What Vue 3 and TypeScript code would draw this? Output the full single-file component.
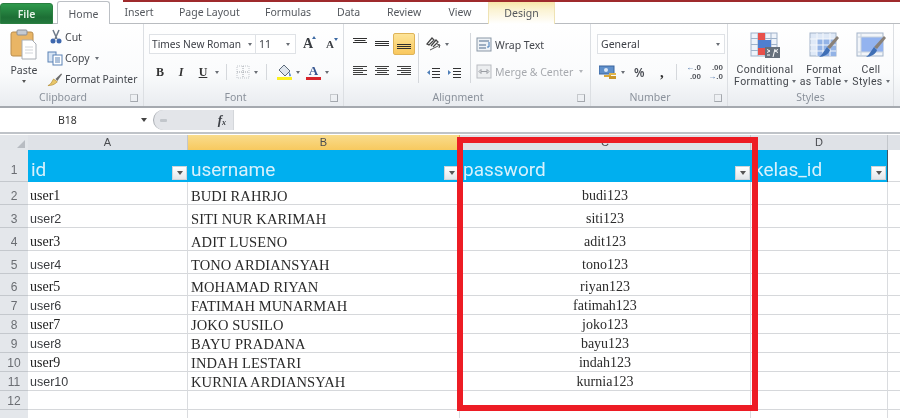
<script setup lang="ts">
interface Row { n: number; h: number; user: string; name: string; pass: string }
const rows: Row[] = [
  { n: 2, h: 23, user: 'user1', name: 'BUDI RAHRJO', pass: 'budi123' },
  { n: 3, h: 23, user: 'user2', name: 'SITI NUR KARIMAH', pass: 'siti123' },
  { n: 4, h: 23, user: 'user3', name: 'ADIT LUSENO', pass: 'adit123' },
  { n: 5, h: 23, user: 'user4', name: 'TONO ARDIANSYAH', pass: 'tono123' },
  { n: 6, h: 22, user: 'user5', name: 'MOHAMAD RIYAN', pass: 'riyan123' },
  { n: 7, h: 19, user: 'user6', name: 'FATIMAH MUNARMAH', pass: 'fatimah123' },
  { n: 8, h: 19, user: 'user7', name: 'JOKO SUSILO', pass: 'joko123' },
  { n: 9, h: 19, user: 'user8', name: 'BAYU PRADANA', pass: 'bayu123' },
  { n: 10, h: 19, user: 'user9', name: 'INDAH LESTARI', pass: 'indah123' },
  { n: 11, h: 19, user: 'user10', name: 'KURNIA ARDIANSYAH', pass: 'kurnia123' },
  { n: 12, h: 19, user: '', name: '', pass: '' },
]
const headers = ['id', 'username', 'password', 'kelas_id']
const alignV = [
  ['M1 .5h14M2.500 2.500h11M1 4.500h14', false],
  ['M1 3.500h14M1 5.500h14M1 7.500h14', false],
  ['M1 6.500h14M1 8.500h14M1 10.500h14', true],
] as [string, boolean][]
const alignH = [
  'M1 1.500h14M1 3.500h10M1 5.500h14M1 7.500h10M1 9.500h14',
  'M1 1.500h14M3 3.500h10M1 5.500h14M3 7.500h10M1 9.500h14',
  'M1 1.500h14M5 3.500h10M1 5.500h14M5 7.500h10M1 9.500h14',
]
const isSerif = (n: number) => n % 2 === 0
</script>

<template>
  <div class="app">
    <header class="tabs">
      <div class="tab file">File</div>
      <div class="tab home">Home</div>
      <div class="tab t-insert">Insert</div>
      <div class="tab t-layout">Page Layout</div>
      <div class="tab t-formulas">Formulas</div>
      <div class="tab t-data">Data</div>
      <div class="tab t-review">Review</div>
      <div class="tab t-view">View</div>
      <div class="tab design">Design</div>
    </header>

    <section class="ribbon">
      <div class="group g-clip">
        <div class="g-body clip-body">
          <div class="paste">
            <svg width="28" height="31" viewBox="0 0 28 31">
              <rect x="1" y="3" width="22" height="24" rx="2" fill="#e9b565" stroke="#b98d4e" />
              <rect x="7" y="1" width="10" height="5" rx="1" fill="#c4cad2" stroke="#8b8f96" />
              <path d="M12 11h10l4 4v15H12z" fill="#fff" stroke="#a8adb4" />
              <path d="M15 18h8M15 21h8M15 24h8" stroke="#d2d5da" />
            </svg>
            <span class="lbl">Paste</span>
            <i class="caret"></i>
          </div>
          <div class="clip-list">
            <div class="clip-item">
              <svg width="16" height="16" viewBox="0 0 16 16"><path d="M6 1l4 9M12 1L8 10" stroke="#6d7a8a" stroke-width="1.500" fill="none" /><circle cx="6" cy="12" r="2.500" fill="#3e68ae" /><circle cx="12" cy="12" r="2.500" fill="#3e68ae" /></svg>
              <span class="lbl">Cut</span>
            </div>
            <div class="clip-item">
              <svg width="16" height="15" viewBox="0 0 16 15"><rect x="1" y="1" width="8" height="10" fill="#d7e4f4" stroke="#5b82b5" /><rect x="6" y="4" width="9" height="10" fill="#fff" stroke="#5b82b5" /><path d="M8 7h5M8 9h5M8 11h5" stroke="#5b82b5" /></svg>
              <span class="lbl">Copy</span><i class="caret small"></i>
            </div>
            <div class="clip-item fp">
              <svg width="16" height="15" viewBox="0 0 17 15"><path d="M1 14c3-1 4-4 6-7l4 3c-3 3-6 4-10 4z" fill="#e8c66a" stroke="#b28d32" stroke-width=".7" /><path d="M9 7l6-6 1 1-5 7z" fill="#6c6c6c" /></svg>
              <span class="lbl">Format Painter</span>
            </div>
          </div>
        </div>
        <div class="g-label pad17">Clipboard<i class="launcher"></i></div>
      </div>

      <div class="group g-font">
        <div class="g-body font-body">
          <div class="font-row top">
            <div class="field font-name"><span>Times New Roman</span><i class="caret small"></i></div>
            <div class="field font-size"><span>11</span><i class="caret small"></i></div>
            <span class="grow-a">A<sup class="tri up"></sup></span>
            <span class="shrink-a">A<sup class="tri down"></sup></span>
          </div>
          <div class="font-row bottom">
            <b class="fmt bold">B</b>
            <em class="fmt ital">I</em>
            <u class="fmt und">U</u>
            <i class="caret small c-u"></i>
            <span class="sep s1"></span>
            <svg class="ic-border" width="14" height="14" viewBox="0 0 14 14"><rect x="1" y="1" width="12" height="12" fill="none" stroke="#c2c6cc" stroke-dasharray="1 1" /><path d="M7 1v12M1 7h12" stroke="#9ea3aa" stroke-dasharray="1 1" /></svg>
            <i class="caret small c-b"></i>
            <span class="sep s2"></span>
            <svg class="ic-fill" width="16" height="17" viewBox="0 0 16 17"><path d="M7 1l6 6-5 5-6-6z" fill="#dfe6ee" stroke="#5c6a7a" /><path d="M12 8c1 1 2 2.500 2 3.500 0 1-2 1-2 0z" fill="#5f8fc8" /><rect x="0" y="13" width="15" height="3" fill="#fbf11f" /></svg>
            <i class="caret small c-f"></i>
            <span class="color-a">A</span>
            <i class="caret small c-a"></i>
          </div>
        </div>
        <div class="g-label pad16">Font<i class="launcher"></i></div>
      </div>

      <div class="group g-align">
        <div class="g-body align-body">
          <div class="align-grid">
            <span v-for="(a, i) in alignV" :key="i" class="al" :class="{ active: a[1] }">
              <svg width="16" height="12" viewBox="0 0 16 12"><path :d="a[0]" stroke="#2f2f2f" fill="none" /></svg>
            </span>
            <span v-for="(a, i) in alignH" :key="'h' + i" class="al">
              <svg width="16" height="12" viewBox="0 0 16 12"><path :d="a" stroke="#3f3f3f" fill="none" /></svg>
            </span>
          </div>
          <span class="sep tall"></span>
          <div class="orient">
            <div class="or-row">
              <svg width="16" height="16" viewBox="0 0 16 16"><path d="M1 8l5-6 2 2-5 5zM5 10l5-6 2 2-5 5" stroke="#444" stroke-width="1.200" fill="none" /><path d="M4 14l10-5M11 8l3 1-1 3" stroke="#555" fill="none" /></svg>
              <i class="caret small"></i>
            </div>
            <div class="or-row indent">
              <svg width="15" height="13" viewBox="0 0 15 13"><path d="M6 1.500h8M6 4.500h8M6 7.500h8M6 10.500h8" stroke="#333" fill="none" /><path d="M4 3L1 5.500 4 8z" fill="#4f7fb8" /></svg>
              <svg width="15" height="13" viewBox="0 0 15 13"><path d="M6 1.500h8M6 4.500h8M6 7.500h8M6 10.500h8" stroke="#333" fill="none" /><path d="M1 3l3 2.500L1 8z" fill="#4f7fb8" /></svg>
            </div>
          </div>
          <span class="sep tall"></span>
          <div class="wrap-col">
            <div class="wrap-item">
              <svg width="16" height="15" viewBox="0 0 16 15"><rect x="1" y="1" width="14" height="13" fill="#eef2f6" stroke="#8a97a6" /><path d="M3 4h10M3 8h7M3 11h7" stroke="#4f6b8c" /><path d="M13 5v5h-2" stroke="#3f79b8" fill="none" /></svg>
              <span class="lbl">Wrap Text</span>
            </div>
            <div class="wrap-item off">
              <svg width="16" height="15" viewBox="0 0 16 15"><rect x="1" y="1" width="14" height="13" fill="#eceef0" stroke="#b9bcc1" /><path d="M5 7.500h6M3 7.500l2-2v4zM13 7.500l-2-2v4z" stroke="#9a9da3" fill="none" /></svg>
              <span class="lbl">Merge &amp; Center</span><i class="caret small light"></i>
            </div>
          </div>
        </div>
        <div class="g-label pad18">Alignment<i class="launcher"></i></div>
      </div>

      <div class="group g-num">
        <div class="g-body num-body">
          <div class="field num-field"><span>General</span><i class="caret small"></i></div>
          <div class="num-row">
            <svg class="money" width="17" height="15" viewBox="0 0 17 15"><rect x="0" y="1" width="15" height="8" fill="#5f8fca" stroke="#3a659e" /><circle cx="7" cy="5" r="2" fill="#dbe7f6" /><rect x="5" y="10" width="7" height="2" fill="#d9a93c" /><rect x="10" y="8" width="7" height="2" fill="#e0b54b" /><rect x="10" y="11" width="7" height="3" fill="#c9962b" /></svg>
            <i class="caret small c-m"></i>
            <span class="pct">%</span>
            <span class="comma">,</span>
            <span class="sep s3"></span>
            <span class="dec-icon d1"><span class="d-top"><b>←</b>.0</span><span class="d-bot">.00</span></span>
            <span class="dec-icon d2"><span class="d-top">.00</span><span class="d-bot"><b>→</b>.0</span></span>
          </div>
        </div>
        <div class="g-label pad18">Number<i class="launcher"></i></div>
      </div>

      <div class="group g-styles">
        <div class="g-body styles-body">
          <div class="style-btn b-cond">
            <svg width="30" height="27" viewBox="0 0 30 27">
              <rect x="1" y="1" width="26" height="23" fill="#eef3fa" stroke="#9fb2ca" />
              <path d="M1 6.500h26M1 12.500h26M1 18.500h26M8 1v23M15 1v23M21 1v23" stroke="#9fb2ca" />
              <rect x="8" y="1" width="7" height="7" fill="#e8504a" /><rect x="8" y="8" width="13" height="8" fill="#4f7fd0" /><rect x="8" y="16" width="7" height="7" fill="#e8504a" />
              <rect x="15" y="15" width="15" height="11" fill="#66707c" /><path d="M17 17.500l3 1.500-3 1.500M17 23h3M25 17l-2 8M28 17.500l-3 1.500 3 1.500" stroke="#fff" fill="none" />
            </svg>
            <span class="lbl">Conditional</span>
            <span class="lbl">Formatting<i class="caret small"></i></span>
          </div>
          <div class="style-btn b-fmt">
            <svg width="30" height="27" viewBox="0 0 30 27">
              <rect x="1" y="1" width="26" height="23" fill="#dfe9f7" stroke="#a3b4c9" />
              <rect x="8" y="7" width="19" height="17" fill="#93b3e6" />
              <path d="M1 7h26M1 13h26M1 19h26M8 1v23M14 1v23M21 1v23" stroke="#f4f7fb" />
              <path d="M28 4l2 2-9 11-3-2z" fill="#8a8178" /><path d="M18 15l3 3c-1 4-6 7-11 7 3-2 5-6 8-10z" fill="#3f6fb5" />
            </svg>
            <span class="lbl">Format</span>
            <span class="lbl">as Table<i class="caret small"></i></span>
          </div>
          <div class="style-btn b-cell">
            <svg width="30" height="27" viewBox="0 0 30 27">
              <rect x="1" y="1" width="26" height="23" fill="#f2f5f9" stroke="#a3b4c9" />
              <rect x="5" y="5" width="22" height="15" fill="#93b3ef" />
              <path d="M1 5h26M5 1v23M1 20h26" stroke="#c8d2de" />
              <path d="M28 4l2 2-9 11-3-2z" fill="#8a8178" /><path d="M18 15l3 3c-1 4-6 7-11 7 3-2 5-6 8-10z" fill="#3f6fb5" />
            </svg>
            <span class="lbl">Cell</span>
            <span class="lbl">Styles<i class="caret small"></i></span>
          </div>
        </div>
        <div class="g-label">Styles</div>
      </div>
    </section>

    <section class="fbar">
      <div class="namebox"><span>B18</span><i class="caret"></i></div>
      <div class="pill">
        <span class="pill-cap"><span class="pill-dot"></span></span>
        <span class="fx">f<sub>x</sub></span>
      </div>
      <div class="finput"></div>
    </section>

    <main class="sheet">
      <div class="corner"><i class="corner-tri"></i></div>
      <div class="col">A</div>
      <div class="col sel">B</div>
      <div class="col">C</div>
      <div class="col">D</div>
      <div class="col end"></div>

      <div class="rowno hrow">1</div>
      <div v-for="h in headers" :key="h" class="hcell">
        <span class="htext">{{ h }}</span>
        <span class="filter"><i class="caret"></i></span>
      </div>
      <div class="cell end hend"></div>

      <template v-for="r in rows" :key="r.n">
        <div class="rowno" :style="{ height: r.h + 'px' }">{{ r.n }}</div>
        <div class="cell user" :class="{ serif: isSerif(r.n) }">{{ r.user }}</div>
        <div class="cell name">{{ r.name }}</div>
        <div class="cell pass">{{ r.pass }}</div>
        <div class="cell"></div>
        <div class="cell end"></div>
      </template>
      <div class="rowno last"></div>
      <div class="cell last"></div>
      <div class="cell last"></div>
      <div class="cell last"></div>
      <div class="cell last"></div>
      <div class="cell end last"></div>

      <div class="redbox"></div>
    </main>
  </div>
</template>

<style>
html, body { margin: 0; background: #fff; overflow: hidden; }
</style>

<style scoped>
.app {
  width: 900px; height: 418px; overflow: hidden; position: relative; background: #fff;
  font-family: "Noto Sans", "Open Sans", sans-serif; color: #3c3f45; filter: blur(.35px);
}
i { display: block; }
.caret { width: 0; height: 0; border: 3.500px solid transparent; border-top: 4px solid #444; border-bottom: 0; flex: none; }
.caret.small { border-width: 3px 2.500px 0; border-style: solid; border-color: #6a6e75 transparent transparent; display: inline-block; }
.caret.light { border-top-color: #b2b5ba; }
.lbl { font-size: 10.500px; line-height: 12px; color: #44474d; white-space: nowrap; }
.sep { width: 1px; background: #d5d8dc; display: block; flex: none; }

/* tabs */
.tabs { height: 24px; display: flex; align-items: flex-end; border-bottom: 1px solid #b9bcc0; border-top: 1px solid transparent; box-sizing: border-box; position: relative; }
.tabs::before { content: ""; position: absolute; left: 123px; right: 0; top: -1px; height: 1.500px; background: #9f2a2c; }
.tab { font-size: 10.500px; line-height: 23px; color: #54585e; height: 22px; text-align: center; box-sizing: border-box; flex: none; white-space: nowrap; }
.file { width: 53px; height: 21px; margin-bottom: -1px; border-radius: 3px 3px 0 0; background: linear-gradient(#2f9a4d, #1d6f35 70%, #23783c); color: #e6f3e8; font-weight: 600; border: 1px solid #2a7f40; line-height: 20px; }
.home { width: 53px; margin-left: 4px; height: 23px; margin-bottom: -1px; background: #fff; border: 1px solid #bcc0c5; border-bottom: 0; border-radius: 3px 3px 0 0; line-height: 24px; }
.t-insert { width: 32px; margin-left: 13px; }
.t-layout { width: 60px; margin-left: 24px; }
.t-formulas { width: 46px; margin-left: 26px; }
.t-data { width: 22px; margin-left: 26px; }
.t-review { width: 34px; margin-left: 28px; }
.t-view { width: 24px; margin-left: 27px; }
.design { width: 67px; margin-left: 16px; height: 24px; margin-bottom: -1px; line-height: 26px; background: linear-gradient(#f7e39e, #fbf3d2 40%, #fff); border-left: 1px solid #efe3b4; border-right: 1px solid #efe3b4; }

/* ribbon */
.ribbon { height: 84px; box-sizing: border-box; display: flex; background: linear-gradient(#fff 0, #fafbfc 60%, #e9ecf0 100%); border-bottom: 2px solid #a5a9af; padding-right: 6px; }
.group { display: flex; flex-direction: column; border-right: 1px solid #dcdfe3; box-sizing: border-box; position: relative; flex: none; }
.g-body { flex: 1; min-height: 0; }
.g-label { height: 16px; line-height: 15px; font-size: 10.500px; color: #8a919b; text-align: center; position: relative; }
.pad16 { padding-right: 16px; }
.pad17 { padding-right: 17px; }
.pad18 { padding-right: 18px; }
.launcher { position: absolute; right: 5px; top: 4px; width: 6px; height: 6px; border: 1px solid #a4a8ae; border-top-color: #c6c9cd; border-left-color: #c6c9cd; }
.g-clip { width: 144px; }
.g-font { width: 200px; }
.g-align { width: 247px; }
.g-num { width: 137px; }
.g-styles { width: 166px; }

.clip-body { display: flex; padding: 4px 0 0 9px; }
.paste { display: flex; flex-direction: column; align-items: center; width: 30px; }
.paste svg { margin: 1px 0 4px; }
.paste .caret { margin-top: 4px; border-width: 3px 2.500px 0; border-top-color: #555; }
.clip-list { margin-left: 8px; padding-top: 1px; display: flex; flex-direction: column; gap: 5px; }
.clip-item { height: 16px; display: flex; align-items: center; gap: 2px; }
.clip-item svg { flex: none; width: 16px; }
.clip-item .caret { margin-left: 3px; }
.fp .lbl { font-size: 10.300px; }

.field { background: #fff; border: 1px solid #dfe2e6; box-sizing: border-box; height: 20px; display: flex; align-items: center; font-size: 10.500px; color: #3e4148; }
.font-body { padding: 10px 0 0 5px; }
.font-row { display: flex; align-items: center; }
.font-row.top { height: 20px; }
.font-name { width: 107px; padding: 0 3px 0 2px; justify-content: space-between; white-space: nowrap; font-size: 10.200px; }
.font-size { width: 40px; padding: 0 5px 0 3px; justify-content: space-between; border-left: 0; }
.grow-a, .shrink-a { font-family: "Liberation Serif", serif; font-weight: 700; color: #3a3d42; position: relative; display: block; }
.grow-a { font-size: 14px; margin-left: 7px; width: 19px; }
.shrink-a { font-size: 11px; margin-left: 4px; }
.tri { position: absolute; top: 0; width: 0; height: 0; border: 2.500px solid transparent; }
.tri.up { border-bottom: 3px solid #3d6aa3; border-top: 0; left: 9px; }
.tri.down { border-top: 3px solid #3d6aa3; border-bottom: 0; left: 8px; }
.font-row.bottom { height: 22px; margin-top: 7px; }
.fmt { font-family: "Liberation Serif", serif; font-size: 12px; color: #333; display: block; width: 12px; text-align: center; }
.bold { margin-left: 5px; }
.ital { margin-left: 9px; font-weight: 700; }
.und { margin-left: 10px; font-weight: 700; }
.c-u { margin-left: 6px; }
.s1 { height: 16px; margin-left: 7px; }
.ic-border { margin-left: 9px; }
.c-b { margin-left: 4px; }
.s2 { height: 16px; margin-left: 8px; }
.ic-fill { margin-left: 10px; }
.c-f { margin-left: 3px; }
.color-a { font-family: "Liberation Serif", serif; font-weight: 700; font-size: 13px; line-height: 13px; color: #35548f; border-bottom: 3px solid #d8232a; width: 15px; text-align: center; margin-left: 6px; }
.c-a { margin-left: 4px; }

.align-body { display: flex; padding-top: 9px; padding-left: 5px; }
.align-grid { display: grid; grid-template-columns: repeat(3, 22px); grid-template-rows: 22px 22px; row-gap: 5px; height: 49px; }
.al { display: flex; align-items: center; justify-content: center; box-sizing: border-box; border: 1px solid transparent; border-radius: 2px; }
.al.active { background: linear-gradient(#fde498, #f9c85e); border-color: #dfb458; }
.sep.tall { height: 50px; margin-left: 3px; }
.orient { width: 48px; padding-left: 7px; display: flex; flex-direction: column; box-sizing: border-box; gap: 13px; padding-top: 3px; }
.or-row { display: flex; align-items: center; gap: 3px; height: 16px; }
.indent { gap: 6px; }
.wrap-col { margin-left: 5px; display: flex; flex-direction: column; gap: 12px; padding-top: 4px; }
.wrap-item { display: flex; align-items: center; gap: 3px; height: 15px; }
.off .lbl { color: #a6a9ae; }
.off .caret { margin-left: 3px; }

.num-body { padding: 10px 0 0 6px; }
.num-field { width: 128px; padding: 0 4px 0 3px; justify-content: space-between; }
.num-row { display: flex; align-items: center; height: 22px; margin-top: 7px; padding-left: 2px; }
.c-m { margin-left: 5px; }
.pct { font-size: 12px; font-weight: 600; margin-left: 9px; width: 14px; color: #4b4e55; }
.comma { font-family: "Liberation Serif", serif; font-weight: 700; font-size: 15px; line-height: 12px; width: 8px; margin-left: 12px; color: #333; }
.s3 { height: 16px; margin-left: 8px; }
.dec-icon { display: flex; flex-direction: column; font-family: "Liberation Sans", sans-serif; font-size: 8px; line-height: 9px; font-weight: 700; color: #55585e; text-align: right; width: 16px; }
.dec-icon b { color: #3d6aa3; }
.d1 { margin-left: 8px; }
.d2 { margin-left: 6px; }

.styles-body { display: flex; padding: 8px 0 0 0; }
.style-btn { display: flex; flex-direction: column; align-items: center; flex: none; }
.style-btn svg { margin-bottom: 5px; }
.style-btn .lbl { font-family: Roboto, sans-serif; letter-spacing: .35px; text-align: center; }
.style-btn .caret { margin-left: 3px; vertical-align: 2px; }
.b-cond { width: 72px; margin-left: 1px; }
.b-fmt { width: 48px; margin-left: -1px; }
.b-cell { width: 46px; }

/* formula bar */
.fbar { height: 24px; display: flex; padding-top: 2px; box-sizing: border-box; background: #fff; }
.namebox { width: 153px; height: 20px; padding-left: 58px; padding-right: 6px; box-sizing: border-box; display: flex; align-items: center; justify-content: space-between; font-size: 10.500px; color: #333; }
.pill { width: 80px; height: 20px; background: #e3e5e9; border-radius: 10px 0 0 10px; display: flex; align-items: center; justify-content: space-between; box-sizing: border-box; padding-right: 7px; border-left: 1.500px solid #a9adb3; }
.pill-cap { width: 12px; height: 12px; border-radius: 50%; display: flex; align-items: center; justify-content: center; margin-left: 3px; }
.pill-dot { width: 7px; height: 3px; background: #c2c6cb; border-radius: 1px; }
.fx { font-family: "Liberation Serif", serif; font-style: italic; font-weight: 700; font-size: 13px; color: #3d4046; }
.fx sub { font-size: 8px; vertical-align: -1px; }
.finput { flex: 1; height: 20px; border-left: 1px solid #d4d7db; }

/* sheet */
.sheet { position: relative; display: grid; grid-template-columns: 28px 160px 272px 291px 137px 12px; grid-auto-rows: min-content; border-top: 2px solid #bfc3c8; padding-top: 1px; background: #fff; }
.corner { height: 15px; background: #e3e6ea; position: relative; }
.corner-tri { position: absolute; right: 3px; bottom: 2px; border: 4px solid transparent; border-right-color: #b8bcc2; border-bottom-color: #b8bcc2; }
.col { height: 15px; background: #dfe2e7; font-family: "Liberation Sans", sans-serif; font-size: 11px; line-height: 15px; color: #4a4c50; text-align: center; border-right: 1px solid #c3c7cc; box-sizing: border-box; }
.col.sel { background: linear-gradient(#f9dc8c, #f7c95f); border-right-color: #d5b15f; }
.col.end { border-right: 0; }
.rowno { box-sizing: border-box; background: #e4e7eb; border-bottom: 1px solid #c4c8cd; font-family: "Liberation Sans", sans-serif; font-size: 12px; line-height: 16px; color: #6a6d72; display: flex; align-items: flex-end; justify-content: center; padding-bottom: 0; }
.hrow { height: 32px; padding-bottom: 3px; }
.hcell { height: 32px; background: #00afef; display: flex; align-items: center; justify-content: space-between; box-sizing: border-box; padding: 8px 1px 0 3px; }
.hcell:nth-of-type(11) { border-right: 1px solid #3f5566; }
.htext { font-family: Roboto, sans-serif; font-size: 19px; line-height: 22px; color: #d8f1fc; }
.filter { width: 15px; height: 14px; align-self: flex-end; margin-bottom: 2px; background: linear-gradient(#fff, #e2e6ea); border: 1px solid #cfd4d9; box-sizing: border-box; display: flex; align-items: center; justify-content: center; }
.filter .caret { border-width: 4px 3.500px 0; border-top-color: #555; }
.cell { box-sizing: border-box; border-right: 1px solid #dadcdf; border-bottom: 1px solid #d6d8db; display: flex; align-items: flex-end; line-height: 16px; padding: 0 0 0 2px; color: #2a2a2a; white-space: nowrap; min-width: 0; }
.cell.end { border-right: 0; }
.hend { background: #fff; border-right: 0; }
.user { font-family: "Liberation Sans", sans-serif; font-size: 12.500px; color: #3b3d41; }
.user.serif { font-family: "Liberation Serif", serif; font-size: 14px; color: #222; }
.name { font-family: "Liberation Serif", serif; font-size: 14.500px; letter-spacing: .1px; padding-left: 3px; }
.pass { font-family: "Liberation Serif", serif; font-size: 14px; justify-content: center; padding-left: 0; }
.rowno.last, .cell.last { height: 8px; border-bottom: 0; padding: 0; }
.redbox { position: absolute; left: 457px; top: 3px; width: 301px; height: 274px; box-sizing: border-box; border: 6.500px solid #ed1c24; pointer-events: none; }
</style>
